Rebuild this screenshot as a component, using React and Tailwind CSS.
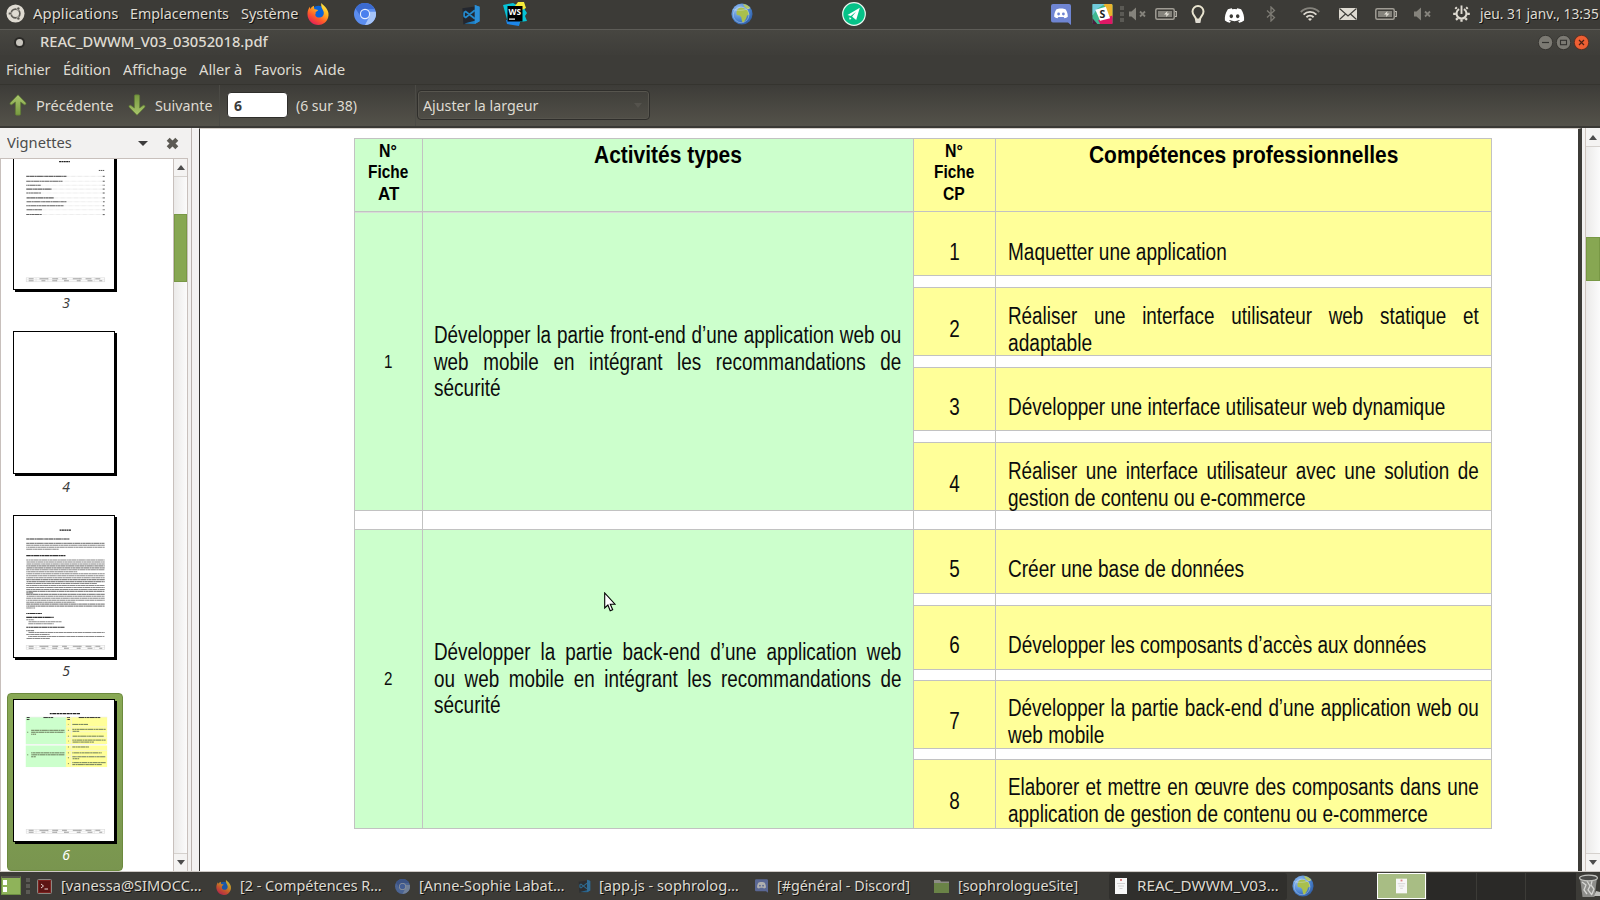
import { useLayoutEffect, useRef } from "react";
import { FaDiscord } from "react-icons/fa";

const UI = "font-['Noto_Sans','Open_Sans',sans-serif]";
const DOC = "font-['Liberation_Sans',Arial,sans-serif]";

/* Single line of text condensed or widened to the width of its box. */
function Fit({ className = "", children }) {
  const outer = useRef(null);
  const inner = useRef(null);
  useLayoutEffect(() => {
    const natural = inner.current.offsetWidth;
    if (natural > 0) {
      inner.current.style.transform = `scaleX(${outer.current.clientWidth / natural})`;
    }
  });
  return (
    <span ref={outer} className={`block shrink-0 overflow-visible whitespace-nowrap ${className}`}>
      <span ref={inner} className="inline-block origin-left">{children}</span>
    </span>
  );
}

/* Justified line in condensed type: the words share the free space. */
function Spread({ className = "", children }) {
  return (
    <span className={`flex origin-left scale-x-[0.82] justify-between whitespace-nowrap ${className}`}>
      {children.split(" ").map((w, i) => (
        <span key={i}>{w}</span>
      ))}
    </span>
  );
}

function Firefox({ className }) {
  return (
    <svg viewBox="0 0 24 24" className={className}>
      <defs>
        <linearGradient id="ffx" x1="0.8" y1="0" x2="0.2" y2="1">
          <stop offset="0" stopColor="#fff14a" />
          <stop offset="0.35" stopColor="#ffb11f" />
          <stop offset="0.65" stopColor="#ff5a2a" />
          <stop offset="1" stopColor="#e0155f" />
        </linearGradient>
      </defs>
      <circle cx="12" cy="12" r="8" fill="#0a63d8" />
      <path d="M15 1c1 2 4 3 5.500 6 2 3 2.500 6 1.500 9.500C20.500 21 16.500 24 12 24 5.500 24 .5 19 .5 12.500c0-3 1-5.500 2.500-7.500 0 1 .2 1.800.5 2.200C4.500 5.500 6 4.500 7.500 4c-.5 1.500-.2 2.800.5 3.500 1 .2 2 .2 3.500.8-.2 1.200-2 1.500-2.500 2.400-.2 1 .5 1.800-.5 2.500.5 2.500 3.500 3.500 6 2.800 2-.6 3.200-2.500 3-5C17.300 8 14 6 15 1z" fill="url(#ffx)" />
    </svg>
  );
}

function Chromium({ className }) {
  return (
    <svg viewBox="0 0 24 24" className={className}>
      <circle cx="12" cy="12" r="12" fill="#5b8def" />
      <path d="M12 6.500H22.600A12 12 0 0 0 1.600 6l5.200 8z" fill="#3c6bd0" />
      <path d="M17 9.500h6.800A12 12 0 0 1 12 24l5-9.500z" fill="#a5c3f8" />
      <circle cx="12" cy="12" r="5.600" fill="#e8f0fe" />
      <circle cx="12" cy="12" r="4.400" fill="#4a80ee" />
    </svg>
  );
}

function Code({ className }) {
  return (
    <svg viewBox="0 0 20 22" className={className}>
      <path d="M1 4.500 14 2.500v16L2 21.500z" fill="#23272f" />
      <path d="M14 1l5 2v15l-5 3-11-.5 11-3z" fill="#1d7fc4" />
      <path d="M14 6.500 4.500 14 2.500 12.800M2.500 9 4.500 8l9.500 7.500M2.800 9v4" fill="none" stroke="#2489ca" strokeWidth="1.800" />
      <path d="M14 1l5 2v15l-5 3z" fill="#2b8fd8" />
    </svg>
  );
}

function WebStorm({ className }) {
  return (
    <svg viewBox="0 0 24 24" className={className}>
      <path d="M0 3l10-2 6 3 5-2 1 6 2 3-2 3 2 5-7 1-1 3-11-2z" fill="#07c3d6" />
      <path d="M12 4l3-4h6l2 6-6 3z" fill="#f6ec3a" />
      <path d="M3 18h14l-1 6-12-2z" fill="#1c86ea" />
      <rect x="4.500" y="4" width="15" height="15.500" fill="#000" />
      <rect x="6" y="16.500" width="6" height="1.200" fill="#fff" />
      <text x="5.600" y="12.500" fontSize="8" fontWeight="700" fill="#fff" fontFamily="Open Sans, sans-serif" textLength="12.500" lengthAdjust="spacingAndGlyphs" style={{ textShadow: "none" }}>WS</text>
    </svg>
  );
}

function Globe({ className }) {
  return (
    <svg viewBox="0 0 24 24" className={className}>
      <defs>
        <radialGradient id="sea" cx="0.35" cy="0.3" r="0.8">
          <stop offset="0" stopColor="#9cc4f5" />
          <stop offset="0.6" stopColor="#4b84d0" />
          <stop offset="1" stopColor="#2a569c" />
        </radialGradient>
      </defs>
      <circle cx="12" cy="12" r="11.500" fill="url(#sea)" />
      <path d="M7 7c2-2.500 5-2.500 7-1.500l1 1.500 3 .5 2 5-2.500 1-1 3.500-2.500 4-2-.5-.8-5-1.700-2-3-.5C5.500 11 6 8.500 7 7z" fill="#a9bf4c" />
      <path d="M13 1.200c3.500.2 6.500 2 8 4.500l-3 1-3-2z" fill="#b5c766" />
      <circle cx="11" cy="13" r="8.500" fill="none" stroke="#dce8f5" strokeOpacity="0.55" strokeWidth="0.800" />
      <path d="M2 7c6 2 14 1 19-2" fill="none" stroke="#dce8f5" strokeOpacity="0.5" strokeWidth="0.800" />
    </svg>
  );
}

function Paper({ className }) {
  return (
    <svg viewBox="0 0 24 24" className={className}>
      <circle cx="12" cy="12" r="11.300" fill="#06c288" stroke="#e9f5ef" strokeWidth="1.200" />
      <path d="M17.800 5.800 5.500 13l3.300 1 5.200-4.300-4 5 .2 0 4 3.300z" fill="#fff" />
      <path d="M7 15.500l2.500.6-1.600 2z" fill="#fff" />
    </svg>
  );
}

function DiscordTile({ className }) {
  return (
    <svg viewBox="0 0 20 21" className={className}>
      <path d="M2 0h16a2 2 0 0 1 2 2v19l-3-2.500H2a2 2 0 0 1-2-2V2a2 2 0 0 1 2-2z" fill="#6f85d2" />
      <path d="M5.500 5.200 8.500 4.500h3l3 .7c1.700 2.400 2.400 5 2.300 7.600-1 .9-2 1.300-3.300 1.500l-.8-1.300H7.300l-.8 1.300c-1.300-.2-2.300-.6-3.300-1.500-.1-2.600.6-5.200 2.300-7.600z" fill="#fff" />
      <circle cx="7.600" cy="10" r="1.400" fill="#6f85d2" />
      <circle cx="12.400" cy="10" r="1.400" fill="#6f85d2" />
    </svg>
  );
}

function Slack({ className }) {
  return (
    <svg viewBox="0 0 21 21" className={className}>
      <rect width="21" height="21" rx="1.500" fill="#3eb890" />
      <path d="M9 0h10.500A1.500 1.500 0 0 1 21 1.500V14l-4 1L13 2z" fill="#ecb32d" />
      <path d="M0 0h13l-8 5-5 7z" fill="#71cadb" />
      <path d="M21 12v9H8l-2-4z" fill="#e01765" />
      <path d="M0 15l5 6H0z" fill="#4a1c3c" />
      <path d="M14 3l4.500 12L8 17.500 3 6z" fill="#fff" />
      <text x="7.300" y="14.300" fontSize="11" fontWeight="700" fill="#222" fontFamily="Open Sans, sans-serif" style={{ textShadow: "none" }}>S</text>
    </svg>
  );
}

function Mute({ className }) {
  return (
    <svg viewBox="0 0 17 14" className={className}>
      <path d="M0 4.500h2.500L7 .5v13L2.500 9.500H0z" fill="#85837c" />
      <path d="M11 4.500l5 5M16 4.500l-5 5" stroke="#85837c" strokeWidth="1.800" />
    </svg>
  );
}

function Battery({ className }) {
  return (
    <svg viewBox="0 0 22 12" className={className}>
      <rect x="0.800" y="0.800" width="18.400" height="10.400" rx="1.500" fill="none" stroke="#9f9c94" strokeWidth="1.500" />
      <path d="M20 3.500h1.300v5H20" fill="none" stroke="#b9b6ad" strokeWidth="1.200" />
      <rect x="3" y="3" width="14" height="6" fill="#85837c" />
      <path d="M12.500 3 9 6.500h2.500L11 9l3.500-3.500H12z" fill="#e4e1d8" />
    </svg>
  );
}

function Bulb({ className }) {
  return (
    <svg viewBox="0 0 14 19" className={className}>
      <path d="M5 14.500C5 11.500 1.500 10.500 1.500 6.500a5.500 5.500 0 0 1 11 0c0 4-3.500 5-3.500 8z" fill="none" stroke="#e9e4cf" strokeWidth="2" />
      <rect x="4.300" y="14.500" width="5.400" height="3.500" rx="1" fill="#dfdbd2" />
    </svg>
  );
}

function Bluetooth({ className }) {
  return (
    <svg viewBox="0 0 10 16" className={className}>
      <path d="M1 4.500l7.500 7L5 15V1l3.500 3.500-7.500 7" fill="none" stroke="#7d7b74" strokeWidth="1.300" />
    </svg>
  );
}

function Wifi({ className }) {
  return (
    <svg viewBox="0 0 20 14" className={className}>
      <path d="M.8 5C6-.2 14-.2 19.200 5" fill="none" stroke="#85837c" strokeWidth="1.900" />
      <path d="M3.600 7.600c3.700-3.600 9.100-3.600 12.800 0" fill="none" stroke="#dfdbd2" strokeWidth="1.900" />
      <path d="M6.400 10.300c2.100-2 5.100-2 7.200 0" fill="none" stroke="#dfdbd2" strokeWidth="1.900" />
      <path d="M8 12l2 2 2-2q-2-1.500-4 0z" fill="#dfdbd2" />
    </svg>
  );
}

function Mail({ className }) {
  return (
    <svg viewBox="0 0 18 12" className={className}>
      <rect width="18" height="12" fill="#dfdbd2" />
      <path d="M.5.500 9 8l8.500-7.500M.5 11.500 6.500 6M17.500 11.500 11.500 6" fill="none" stroke="#3c3b37" strokeWidth="1.100" />
    </svg>
  );
}

function Power({ className }) {
  return (
    <svg viewBox="-9 -9 18 18" className={className}>
      <path d="M-2.500-4.600a5.300 5.300 0 1 0 5 0" fill="none" stroke="#dfdbd2" strokeWidth="2.200" />
      <path d="M0-8.500V.5" stroke="#dfdbd2" strokeWidth="2" />
      <path d="M-5-5l-1.500-1.500M5-5l1.500-1.500M-6 .5h-2.800M6 .5h2.800M-4 5l-1.800 1.800M4 5l1.800 1.800M0 6v2.800" stroke="#dfdbd2" strokeWidth="2.400" />
    </svg>
  );
}

function Dots({ className }) {
  return (
    <span className={`flex shrink-0 flex-col gap-0.5 ${className}`}>
      <span className="size-1 bg-[#5b5a55]" />
      <span className="size-1 bg-[#5b5a55]" />
      <span className="size-1 bg-[#5b5a55]" />
    </span>
  );
}

function TopPanel() {
  return (
    <header className="flex h-[29px] items-start overflow-hidden bg-[#3c3b37] text-sm leading-[27px] text-[#dfdbd2] [text-shadow:1px_1px_0_#111]">
      <svg viewBox="0 0 20 20" className="mt-1 ml-[6px] size-[19px] shrink-0">
        <circle cx="10" cy="10" r="9.500" fill="#dfdbd2" />
        <circle cx="10" cy="10" r="4.600" fill="none" stroke="#5c5a54" strokeWidth="1.800" />
        <circle cx="4.200" cy="10" r="1.700" fill="#5c5a54" stroke="#dfdbd2" strokeWidth="0.700" />
        <circle cx="13" cy="4.800" r="1.700" fill="#5c5a54" stroke="#dfdbd2" strokeWidth="0.700" />
        <circle cx="13" cy="15.200" r="1.700" fill="#5c5a54" stroke="#dfdbd2" strokeWidth="0.700" />
      </svg>
      <Fit className="ml-2 w-[85px]">Applications</Fit>
      <Fit className="ml-[12px] w-[99px]">Emplacements</Fit>
      <Fit className="ml-[12px] w-[57px]">Système</Fit>
      <Firefox className="mt-[2px] ml-[9px] size-[23px] shrink-0" />
      <Chromium className="mt-[3px] ml-[24px] size-[22px] shrink-0" />
      <Code className="mt-[4px] ml-[85px] h-[21px] w-[20px] shrink-0" />
      <WebStorm className="mt-[2px] ml-[22px] size-[24px] shrink-0" />
      <Globe className="mt-[3px] ml-[204px] size-[22px] shrink-0" />
      <Paper className="mt-[2px] ml-[89px] size-[24px] shrink-0" />
      <DiscordTile className="mt-[4px] ml-[185px] h-[21px] w-[20px] shrink-0" />
      <Slack className="mt-[4px] ml-[21px] h-[20px] w-[21px] shrink-0" />
      <Dots className="mt-[6px] ml-[7px]" />
      <Mute className="mt-[7px] ml-[5px] h-[14px] w-[17px] shrink-0" />
      <Battery className="mt-[8px] ml-[9px] h-[12px] w-[22px] shrink-0" />
      <Bulb className="mt-[5px] ml-[14px] h-[19px] w-[14px] shrink-0" />
      <FaDiscord className="mt-[5px] ml-[19px] size-[21px] shrink-0 text-white" />
      <Bluetooth className="mt-[6px] ml-[21px] h-[16px] w-[10px] shrink-0" />
      <Wifi className="mt-[7px] ml-[24px] h-[14px] w-[20px] shrink-0" />
      <Mail className="mt-[8px] ml-[19px] h-[12px] w-[18px] shrink-0" />
      <Battery className="mt-[8px] ml-[18px] h-[12px] w-[22px] shrink-0" />
      <Mute className="mt-[7px] ml-[17px] h-[14px] w-[17px] shrink-0" />
      <Power className="mt-[5px] ml-[22px] size-[17px] shrink-0" />
      <Fit className="ml-[10px] w-[119px]">jeu. 31 janv., 13:35</Fit>
    </header>
  );
}

function TitleBar() {
  return (
    <div className="flex h-[26px] items-start border-t border-[#5d5c57] bg-linear-to-b from-[#474641] to-[#3e3d39] text-sm leading-[23px] text-[#dfdbd2]">
      <span className="mt-[7px] ml-[14px] flex size-[11px] items-center justify-center rounded-full bg-[#2b2a27]">
        <span className="size-[7px] rounded-full bg-[#c9c6be]" />
      </span>
      <Fit className="ml-[15px] w-[228px] font-medium">REAC_DWWM_V03_03052018.pdf</Fit>
      <span className="mt-[5px] ml-auto flex gap-[3px] pr-[11px]">
        <svg viewBox="0 0 15 15" className="size-[15px]">
          <circle cx="7.500" cy="7.500" r="7.200" fill="#7c7a73" stroke="#2e2d2a" strokeWidth="0.800" />
          <path d="M4 7.500h7" stroke="#33322f" strokeWidth="1.200" />
        </svg>
        <svg viewBox="0 0 15 15" className="size-[15px]">
          <circle cx="7.500" cy="7.500" r="7.200" fill="#7c7a73" stroke="#2e2d2a" strokeWidth="0.800" />
          <rect x="4.500" y="5.300" width="6" height="4.400" fill="none" stroke="#33322f" strokeWidth="1.100" />
        </svg>
        <svg viewBox="0 0 15 15" className="size-[15px]">
          <circle cx="7.500" cy="7.500" r="7.200" fill="#ee5f33" stroke="#55281a" strokeWidth="0.800" />
          <path d="M5 5l5 5M10 5l-5 5" stroke="#4a2014" strokeWidth="1.200" />
        </svg>
      </span>
    </div>
  );
}

function MenuBar() {
  return (
    <nav className="flex h-[29px] bg-[#3d3c38] pl-[6px] text-sm leading-[30px] text-[#dfdbd2]">
      <Fit className="w-[45px]">Fichier</Fit>
      <Fit className="ml-[12px] w-[48px]">Édition</Fit>
      <Fit className="ml-[12px] w-[64px]">Affichage</Fit>
      <Fit className="ml-[12px] w-[43px]">Aller à</Fit>
      <Fit className="ml-[12px] w-[48px]">Favoris</Fit>
      <Fit className="ml-[12px] w-[31px]">Aide</Fit>
    </nav>
  );
}

function Arrow({ className }) {
  return (
    <svg viewBox="0 0 18 22" className={className}>
      <defs>
        <linearGradient id="leaf" x1="0" y1="0" x2="0" y2="1">
          <stop offset="0" stopColor="#a9c66c" />
          <stop offset="1" stopColor="#77993f" />
        </linearGradient>
      </defs>
      <path d="M9 .8 17 9q.6 2-1.600 1.800L11.600 8v12q0 1.200-1.200 1.200H7.600q-1.200 0-1.200-1.200V8l-3.800 2.800Q.4 11 1 9z" fill="url(#leaf)" stroke="#5e7a35" strokeWidth="0.700" />
    </svg>
  );
}

function Toolbar() {
  return (
    <div className="flex h-[42px] items-start border-t border-[#35342f] bg-linear-to-b from-[#3d3c38] to-[#54524a] text-sm leading-[42px] text-[#dfdbd2]">
      <Arrow className="mt-[9px] ml-[9px] h-[22px] w-[18px] shrink-0" />
      <Fit className="ml-[9px] w-[78px]">Précédente</Fit>
      <Arrow className="mt-[9px] ml-[14px] h-[22px] w-[18px] shrink-0 rotate-180" />
      <Fit className="ml-[9px] w-[58px]">Suivante</Fit>
      <span className="ml-[6px] h-[41px] w-px bg-[#4b4a45]" />
      <span className="mt-[7px] ml-[7px] flex h-[26px] w-[61px] rounded-[4px] border border-[#2f2e2b] bg-white pl-[6px] text-sm leading-[25px] font-bold text-[#3c3c3c]">6</span>
      <Fit className="ml-[8px] w-[61px]">(6 sur 38)</Fit>
      <span className="ml-[58px] h-[41px] w-px bg-[#4b4a45]" />
      <span className="mt-[5px] ml-[1px] flex h-[30px] w-[233px] items-center rounded-[4px] border border-[#2f2e2b] pl-[5px] leading-[29px] shadow-[inset_0_0_0_1px_#57554e]">
        <Fit className="w-[115px]">Ajuster la largeur</Fit>
        <svg viewBox="0 0 8 5" className="mr-[7px] ml-auto h-[5px] w-[8px]">
          <path d="M0 0h8L4 5z" fill="#55534d" />
        </svg>
      </span>
    </div>
  );
}

function Footer({ y }) {
  return (
    <g>
      <rect x="12.500" y={y} width="80" height="4" fill="none" stroke="#ddd" strokeWidth="0.700" />
      <path d={`M12.500 ${y + 2}h80M22.500 ${y}v4M34.500 ${y}v4M43.500 ${y}v4M52 ${y}v4M67 ${y}v4M82 ${y}v4`} stroke="#ddd" strokeWidth="0.600" />
      <path d={`M15 ${y + 1}h75`} stroke="#888" strokeWidth="0.800" strokeDasharray="5 6 9 4 6 4" />
      <path d={`M15 ${y + 3}h75`} stroke="#888" strokeWidth="0.800" strokeDasharray="5 8 4 7 5 7" />
    </g>
  );
}

function Rows({ rows, dash = "3 .3 5 .4 2 .3 6 .4 1.500 .3", color = "#8a8a8a", thick = 1.1 }) {
  return rows.map(([y, w, x = 12.5], i) => (
    <path key={i} d={`M${x} ${y}h${w}`} stroke={color} strokeWidth={thick} strokeDasharray={dash} strokeDashoffset={i * 3.7} />
  ));
}

function SummaryPage() {
  const entries = [[28.5, 41], [33.5, 37], [37.5, 15], [41.5, 26], [45.5, 15], [50.5, 28], [54.5, 41], [58.5, 38], [62.5, 16], [67.5, 16]];
  return (
    <svg viewBox="0 0 102 143" className="size-full">
      <path d="M46 13.500h11" stroke="#222" strokeWidth="1.300" strokeDasharray="2 .4" />
      <path d="M86.500 22.500h6" stroke="#555" strokeWidth="1" strokeDasharray="1.500 .5" />
      <Rows rows={entries.map(([y]) => [y, 80])} dash=".5 .7" color="#ddd" />
      <Rows rows={entries} color="#666" />
      <Rows rows={entries.map(([y]) => [y, 2, 90.5])} color="#666" />
      <Footer y={132} />
    </svg>
  );
}

function TextPage() {
  return (
    <svg viewBox="0 0 102 143" className="size-full">
      <path d="M46.500 14h12" stroke="#222" strokeWidth="1.300" strokeDasharray="2 .4" />
      <Rows color="#333" rows={[[23, 44], [40, 40], [99, 16], [103, 28], [113, 39]]} />
      <Rows rows={[[27.5, 80], [29.5, 80], [31.5, 80], [33.5, 33], [44.5, 80], [46.5, 80], [48.5, 80], [50.5, 80], [52.5, 80], [54.5, 80], [56.5, 52], [58.5, 80], [60.5, 80], [62.5, 80], [64.5, 80], [66.5, 80], [68.5, 72], [70.5, 80], [72.5, 80], [74.5, 80], [76.5, 80], [78, 7], [79.5, 80], [81.5, 80], [83.5, 80], [85.5, 80], [87.5, 50], [89.5, 80], [91.5, 80], [93.5, 9], [105.5, 8], [107.5, 34, 14.5], [109.5, 26, 14.5], [116.5, 8], [118.5, 78, 14.5], [120.5, 24], [122.5, 78, 14.5], [124.5, 24]]} />
      <Footer y={131.5} />
    </svg>
  );
}

function TablePage() {
  return (
    <svg viewBox="0 0 102 143" className="size-full">
      <path d="M36.500 13.500h31" stroke="#222" strokeWidth="1.300" strokeDasharray="2 .5 4 .5 3 .4" />
      <rect x="12" y="17" width="41" height="27.500" fill="#ccffcc" />
      <rect x="12" y="46" width="41" height="22" fill="#ccffcc" />
      <rect x="53" y="17" width="42" height="27.500" fill="#ffff99" />
      <rect x="53" y="46" width="42" height="22" fill="#ffff99" />
      <path d="M12 45h82M53 27h42M53 32h42M53 38h42M53 51h42M53 57h42M58.500 17v51M12 17h83" stroke="#eee" strokeWidth="0.600" />
      <Rows color="#333" thick={1} rows={[[17.500, 3, 13], [17.500, 10, 30], [17.500, 3, 54], [17.500, 22, 66], [19.500, 3, 13], [19.500, 3, 54]]} />
      <Rows color="#6a7a5a" thick={1} rows={[[30.500, 34, 17.5], [32.500, 34, 17.5], [34.500, 5, 17.5], [24.500, 16, 59.5], [29.500, 34, 59.5], [31.500, 7, 59.5], [36.500, 32, 59.5], [40.500, 34, 59.5], [42.500, 22, 59.5], [47.500, 17, 59.5], [53.500, 34, 17.5], [55.500, 34, 17.5], [57.500, 5, 17.5], [53.500, 30, 59.5], [57.500, 34, 59.5], [59.500, 7, 59.5], [63.500, 34, 59.5], [65.500, 30, 59.5], [32.5, 1, 13.5], [55.500, 1, 13.5], [24.500, 1, 55], [30.5, 1, 55], [36.500, 1, 55], [41.5, 1, 55], [47.500, 1, 55], [53.500, 1, 55], [58.5, 1, 55], [64.5, 1, 55]]} />
      <Footer y={131.5} />
    </svg>
  );
}

function Thumb({ label, selected, children }) {
  return (
    <div className={`ml-[6px] flex h-[178px] w-[116px] shrink-0 flex-col rounded-[4px] border pt-[5px] pl-[5px] ${selected ? "border-[#6c8a3e] bg-linear-to-b from-[#89a955] to-[#79954f]" : "border-transparent"}`}>
      <div className="h-[143px] w-[102px] shrink-0 border border-black bg-white shadow-[2px_2px_0_0_#000]">{children}</div>
      <span className={`w-[106px] text-center text-sm leading-[26px] italic ${selected ? "text-white" : "text-[#3c3c3c]"}`}>{label}</span>
    </div>
  );
}

function ScrollArrow({ down, className }) {
  return (
    <span className={`flex items-center justify-center border-[#d5d1cd] bg-[#f4f3f2] ${className}`}>
      <svg viewBox="0 0 8 5" className={`h-[5px] w-[8px] ${down ? "rotate-180" : ""}`}>
        <path d="M0 5h8L4 0z" fill="#4c4c4c" />
      </svg>
    </span>
  );
}

function Sidebar() {
  return (
    <aside className="flex w-[192px] shrink-0 flex-col border-r border-[#b9b1ac] bg-[#f2f1f0]">
      <div className="flex h-[30px] items-start text-sm leading-[29px] text-[#4c4c4c]">
        <Fit className="ml-[7px] w-[65px]">Vignettes</Fit>
        <svg viewBox="0 0 10 5" className="mt-[13px] ml-[66px] h-[5px] w-[10px] shrink-0">
          <path d="M0 0h10L5 5z" fill="#3c3c3c" />
        </svg>
        <svg viewBox="0 0 13 13" className="mt-[9px] ml-[18px] size-[13px] shrink-0">
          <path d="M2.200 2.200l8.600 8.600M10.800 2.200l-8.600 8.600" stroke="#5c5a54" strokeWidth="4.200" />
        </svg>
      </div>
      <div className="flex h-[713px] w-[188px] border-t border-r border-l border-[#c8c0bc]">
        <div className="flex h-[712px] w-[172px] flex-col justify-end gap-[6px] overflow-hidden bg-white">
          <Thumb label="3"><SummaryPage /></Thumb>
          <Thumb label="4" />
          <Thumb label="5"><TextPage /></Thumb>
          <Thumb label="6" selected><TablePage /></Thumb>
        </div>
        <div className="flex w-[14px] flex-col border-l border-[#c8c0bc] bg-linear-to-r from-[#ebeae9] to-[#fbfbfb]">
          <ScrollArrow className="h-[18px] border-b" />
          <span className="mt-[37px] h-[68px] border border-[#789845] bg-[#87a752]" />
          <ScrollArrow down className="mt-auto h-[18px] border-t" />
        </div>
      </div>
    </aside>
  );
}

const GREEN = "bg-[#ccffcc]";
const YELLOW = "bg-[#ffff99]";

function Skill({ n, pad, numPad, children }) {
  return (
    <>
      <div className={`col-start-3 pr-px text-center ${YELLOW} ${numPad}`}>
        <span className="inline-block scale-x-[0.82]">{n}</span>
      </div>
      <div className={`col-start-4 pl-[12px] ${YELLOW} ${pad}`}>{children}</div>
    </>
  );
}

function Gap() {
  return (
    <>
      <div className="col-start-3 bg-white" />
      <div className="col-start-4 bg-white" />
    </>
  );
}

function SkillsTable() {
  return (
    <div className={`mt-[9px] ml-[154px] grid w-[1138px] grid-cols-[67px_490px_81px_495px] grid-rows-[72px_63px_11px_67px_11px_62px_11px_67px_18px_63px_11px_63px_10px_67px_10px_68px] gap-px border border-[#c2c2c2] bg-[#c2c2c2] text-[23px] leading-[26.5px] text-[#0c0c0c] ${DOC}`}>
      <div className={`flex flex-col items-center pt-px pr-px text-[18.5px] leading-[21.3px] font-bold text-black ${GREEN}`}>
        <Fit className="w-[18px]">N°</Fit>
        <Fit className="w-[40px]">Fiche</Fit>
        <Fit className="w-[21px]">AT</Fit>
      </div>
      <div className={`flex justify-center pt-[2px] pr-px text-[23.5px] leading-[28px] font-bold text-black ${GREEN}`}>
        <Fit className="w-[148px]">Activités types</Fit>
      </div>
      <div className={`flex flex-col items-center pt-px pr-px text-[18.5px] leading-[21.3px] font-bold text-black ${YELLOW}`}>
        <Fit className="w-[18px]">N°</Fit>
        <Fit className="w-[40px]">Fiche</Fit>
        <Fit className="w-[22px]">CP</Fit>
      </div>
      <div className={`flex justify-center pt-[2px] text-[23.5px] leading-[28px] font-bold text-black ${YELLOW}`}>
        <Fit className="w-[309px]">Compétences professionnelles</Fit>
      </div>

      <div className={`col-start-1 row-[2/9] border-t border-[#d8dcd8] pt-[136px] text-center text-[18.5px] ${GREEN}`}>
        <span className="inline-block scale-x-[0.82]">1</span>
      </div>
      <div className={`col-start-2 row-[2/9] border-t border-[#d8dcd8] pt-[109px] pl-[11px] ${GREEN}`}>
        <Spread className="w-[570px]">Développer la partie front-end d’une application web ou</Spread>
        <Spread className="w-[570px]">web mobile en intégrant les recommandations de</Spread>
        <Fit className="w-[67px]">sécurité</Fit>
      </div>
      <Skill n="1" numPad="pt-[27px]" pad="pt-[27px]"><Fit className="w-[219px]">Maquetter une application</Fit></Skill>
      <Gap />
      <Skill n="2" numPad="pt-[28px]" pad="pt-[15px]">
        <Spread className="w-[574px]">Réaliser une interface utilisateur web statique et</Spread>
        <Fit className="w-[84px]">adaptable</Fit>
      </Skill>
      <Gap />
      <Skill n="3" numPad="pt-[26px]" pad="pt-[26px]"><Fit className="w-[437px]">Développer une interface utilisateur web dynamique</Fit></Skill>
      <Gap />
      <Skill n="4" numPad="pt-[28px]" pad="pt-[15px]">
        <Spread className="w-[574px]">Réaliser une interface utilisateur avec une solution de</Spread>
        <Fit className="w-[298px]">gestion de contenu ou e-commerce</Fit>
      </Skill>

      <div className="col-start-1 bg-white" />
      <div className="bg-white" />
      <div className="bg-white" />
      <div className="bg-white" />

      <div className={`col-start-1 row-[10/17] pt-[136px] text-center text-[18.5px] ${GREEN}`}>
        <span className="inline-block scale-x-[0.82]">2</span>
      </div>
      <div className={`col-start-2 row-[10/17] pt-[109px] pl-[11px] ${GREEN}`}>
        <Spread className="w-[570px]">Développer la partie back-end d’une application web</Spread>
        <Spread className="w-[570px]">ou web mobile en intégrant les recommandations de</Spread>
        <Fit className="w-[67px]">sécurité</Fit>
      </div>
      <Skill n="5" numPad="pt-[26px]" pad="pt-[26px]"><Fit className="w-[236px]">Créer une base de données</Fit></Skill>
      <Gap />
      <Skill n="6" numPad="pt-[26px]" pad="pt-[26px]"><Fit className="w-[418px]">Développer les composants d’accès aux données</Fit></Skill>
      <Gap />
      <Skill n="7" numPad="pt-[27px]" pad="pt-[14px]">
        <Spread className="w-[574px]">Développer la partie back-end d’une application web ou</Spread>
        <Fit className="w-[96px]">web mobile</Fit>
      </Skill>
      <Gap />
      <Skill n="8" numPad="pt-[28px]" pad="pt-[14px]">
        <Spread className="w-[574px]">Elaborer et mettre en œuvre des composants dans une</Spread>
        <Fit className="w-[420px]">application de gestion de contenu ou e-commerce</Fit>
      </Skill>
    </div>
  );
}

function Viewer() {
  return (
    <main className="flex min-w-0 flex-1 bg-[#f2f1f0] pl-[7px]">
      <div className="w-[1383px] shrink-0 border-t border-r-4 border-l border-t-[#d5cfc9] border-r-[#3c3b37] border-l-[#33322f] bg-white">
        <SkillsTable />
      </div>
      <div className="ml-[3px] flex flex-1 flex-col border-l border-[#cfc5be] bg-linear-to-r from-[#ebeae9] to-[#fbfbfb]">
        <ScrollArrow className="h-[19px] border-b" />
        <span className="mt-[90px] h-[44px] border border-[#789845] bg-[#87a752]" />
        <ScrollArrow down className="mt-auto h-[18px] border-t" />
      </div>
    </main>
  );
}

function DocIcon({ className }) {
  return (
    <svg viewBox="0 0 12 16" className={className}>
      <rect width="12" height="16" fill="#f7f7f7" />
      <rect x="5" y="1" width="2" height="2" fill="#d88" />
      <path d="M2 5.500h8M3 8h6M4.500 10.500h3" stroke="#c8c8c8" strokeWidth="0.800" />
    </svg>
  );
}

function TaskBar() {
  return (
    <footer className="flex h-[29px] items-start overflow-hidden border-t border-[#cfcac6] bg-[#3c3b37] text-sm leading-[28px] text-[#dfdbd2] [text-shadow:1px_1px_0_#111]">
      <span className="mt-[4px] ml-[1px] flex h-[19px] w-[20px] shrink-0 flex-col justify-center gap-0.5 border border-t-2 border-[#6e8f42] border-t-[#55534d] bg-[#8fb35a] pl-px">
        <span className="h-[5px] w-[4px] bg-white" />
        <span className="h-[5px] w-[4px] bg-white" />
      </span>
      <Dots className="mt-[6px] ml-[5px]" />
      <svg viewBox="0 0 15 15" className="mt-[7px] ml-[7px] size-[15px] shrink-0">
        <rect x="0.500" y="0.500" width="14" height="14" rx="1" fill="#7d2320" stroke="#8b8983" />
        <rect x="2" y="2" width="11" height="11" fill="#5e1514" />
        <path d="M4 5l2.500 2L4 9M7.500 10H11" fill="none" stroke="#e6d5d2" />
      </svg>
      <Fit className="ml-[9px] w-[141px]">[vanessa@SIMOCC…</Fit>
      <Firefox className="mt-[7px] ml-[14px] size-[16px] shrink-0 opacity-70" />
      <Fit className="ml-[8px] w-[142px]">[2 - Compétences R…</Fit>
      <Chromium className="mt-[7px] ml-[13px] size-[15px] shrink-0 opacity-50" />
      <Fit className="ml-[9px] w-[146px]">[Anne-Sophie Labat…</Fit>
      <Code className="mt-[7px] ml-[13px] h-[14px] w-[13px] shrink-0 opacity-60" />
      <Fit className="ml-[8px] w-[140px]">[app.js - sophrolog…</Fit>
      <DiscordTile className="mt-[7px] ml-[16px] h-[14px] w-[13px] shrink-0 opacity-60" />
      <Fit className="ml-[9px] w-[133px]">[#général - Discord]</Fit>
      <svg viewBox="0 0 15 13" className="mt-[8px] ml-[24px] h-[13px] w-[15px] shrink-0">
        <path d="M0 0h6l1 1.500h8V13H0z" fill="#8d8c86" />
        <rect y="3" width="15" height="10" fill="#6a8347" />
      </svg>
      <Fit className="ml-[9px] w-[120px]">[sophrologueSite]</Fit>
      <span className="mt-px ml-[31px] flex h-[27px] w-[178px] shrink-0 rounded-[3px] bg-[#302f2c] leading-[26px]">
        <DocIcon className="mt-[5px] ml-[6px] h-[16px] w-[12px] shrink-0" />
        <Fit className="ml-[10px] w-[142px]">REAC_DWWM_V03…</Fit>
      </span>
      <Globe className="mt-[3px] ml-[5px] size-[22px] shrink-0" />
      <span className="mt-px ml-[63px] flex h-[26px] w-[49px] shrink-0 items-center justify-center border border-white bg-[#a8bd84]">
        <DocIcon className="h-[16px] w-[11px]" />
      </span>
      <span className="mt-px ml-px grid h-[27px] w-[149px] shrink-0 grid-cols-3 divide-x divide-[#3c3b37] bg-[#2a2927]">
        <span />
        <span />
        <span />
      </span>
      <svg viewBox="0 0 22 24" className="mt-[2px] ml-[2px] h-[24px] w-[22px] shrink-0">
        <path d="M2 4h17l-2.500 19h-12z" fill="#8e8e8b" />
        <path d="M4 8l4 3-2 5 3 4M9 7l3 5-2 4 4 5M14 7l-1 4 3 4-2 5" fill="none" stroke="#d6d6d3" strokeWidth="1.300" />
        <ellipse cx="10.500" cy="4" rx="9" ry="2.800" fill="#4b4b49" stroke="#c4c4c0" strokeWidth="1.200" />
        <path d="M18 17l4 1v4h-6z" fill="#c0c0bd" />
      </svg>
    </footer>
  );
}

export default function App() {
  return (
    <div className={`relative flex h-[900px] w-[1600px] flex-col overflow-hidden bg-[#3c3b37] ${UI}`}>
      <TopPanel />
      <TitleBar />
      <MenuBar />
      <Toolbar />
      <div className="h-[2px] shrink-0 bg-[#3a3935]" />
      <div className="flex h-[743px] shrink-0">
        <Sidebar />
        <Viewer />
      </div>
      <TaskBar />
      <svg viewBox="0 0 12 20" className="absolute top-[592px] left-[604px] h-[20px] w-[12px]">
        <path d="M.7 1v15l3.200-3 2.300 5.700 2.500-1-2.400-5.500h4.700z" fill="#fff" stroke="#000" strokeWidth="1.100" />
      </svg>
    </div>
  );
}
